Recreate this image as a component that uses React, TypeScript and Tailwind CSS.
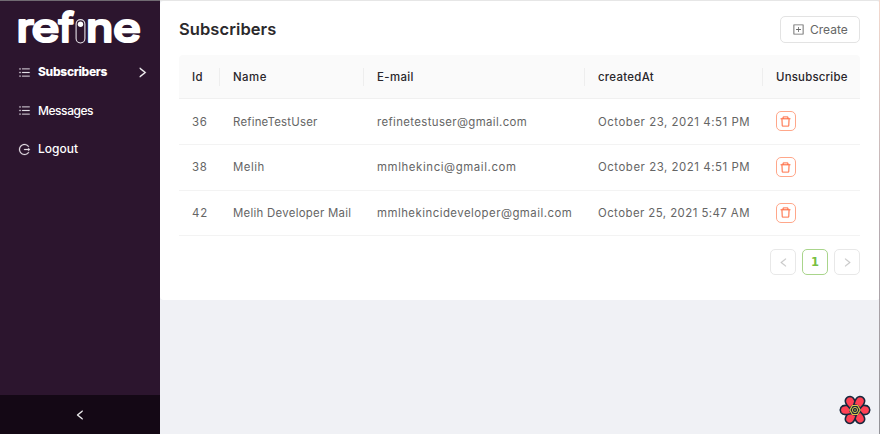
import type { ReactNode } from "react";
import {
  AiOutlineDelete,
  AiOutlineLeft,
  AiOutlineLogout,
  AiOutlinePlusSquare,
  AiOutlineRight,
  AiOutlineUnorderedList,
} from "react-icons/ai";

const columns = "grid grid-cols-[41px_144px_221px_178px_97px]";

const rows = [
  { id: "36", name: "RefineTestUser", email: "refinetestuser@gmail.com", date: "October 23, 2021 4:51 PM", n: "tracking-[0.22px]", e: "tracking-[0.37px]", d: "tracking-[0.55px]", h: "h-[46px]", p: "pt-[2px]" },
  { id: "38", name: "Melih", email: "mmlhekinci@gmail.com", date: "October 23, 2021 4:51 PM", n: "tracking-[0.5px]", e: "tracking-[0.6px]", d: "tracking-[0.55px]", h: "h-[46px]", p: "pt-px" },
  { id: "42", name: "Melih Developer Mail", email: "mmlhekincideveloper@gmail.com", date: "October 25, 2021 5:47 AM", n: "tracking-[0.28px]", e: "tracking-[0.48px]", d: "tracking-[0.45px]", h: "h-[45px]", p: "pt-px" },
];

function Logo() {
  return (
    <svg width="160" height="52" viewBox="0 0 160 52" className="block shrink-0" aria-label="refine">
      <g fill="#fff" stroke="#fff" strokeWidth="2.2" strokeLinejoin="round" fontFamily="Inter, 'Liberation Sans', sans-serif" fontWeight="500" fontSize="40.5">
        <text x="16.5" y="41" textLength="17.5" lengthAdjust="spacingAndGlyphs">r</text>
        <text x="31.5" y="41" textLength="28" lengthAdjust="spacingAndGlyphs">e</text>
        <text x="58.5" y="41" textLength="15.5" lengthAdjust="spacingAndGlyphs">f</text>
        <text x="86" y="41" textLength="27.5" lengthAdjust="spacingAndGlyphs">n</text>
        <text x="113" y="41" textLength="28" lengthAdjust="spacingAndGlyphs">e</text>
      </g>
      <rect x="76.1" y="18.6" width="8.8" height="23.4" rx="4.4" fill="none" stroke="#e4dfe6" strokeWidth="1.1" />
      <circle cx="80.5" cy="23.2" r="2.7" fill="#fff" />
    </svg>
  );
}

function NavItem({ icon, label, active, spacing }: { icon: ReactNode; label: string; active?: boolean; spacing: string }) {
  return (
    <div className="flex h-[38.5px] items-center pl-[18px] pr-3 text-[12px] text-white">
      <span className="w-5 text-[13px] text-[#e6e1e8]">{icon}</span>
      <span className={`${active ? "font-extrabold" : "font-medium"} ${spacing}`}>{label}</span>
      {active && <AiOutlineRight className="-mr-px ml-auto text-[13px] [stroke-width:30]" />}
    </div>
  );
}

function Header({ label, spacing, last }: { label: string; spacing: string; last?: boolean }) {
  return (
    <div className="relative flex h-full items-center pl-[13px] pt-[3px] font-medium text-[#29262b]">
      <span className={spacing}>{label}</span>
      {!last && <span className="absolute right-0 top-[13px] h-[18px] w-px bg-[#eeeeee]" />}
    </div>
  );
}

function ReactQueryFlower() {
  return (
    <svg width="34" height="34" viewBox="-17 -17 34 34" className="absolute bottom-[7px] right-2">
      <g fill="#ff4154" stroke="#16283d" strokeWidth="1.6" strokeLinejoin="round">
        {[0, 60, 120, 180, 240, 300].map((angle) => (
          <path key={angle} d="M3 -3.5 L8 -4.5 Q12.4 -5 14 -2.6 Q15.6 0 14 2.6 Q12.4 5 8 4.5 L3 3.5 Z" transform={`rotate(${angle})`} />
        ))}
      </g>
      <circle r="5.8" fill="#16283d" />
      <path d="M-2.6 -4.5 H2.6 L5.2 0 L2.6 4.5 H-2.6 L-5.2 0 Z" fill="#16283d" stroke="#d8c34a" strokeWidth="1.2" />
      <circle r="2.6" fill="none" stroke="#d8c34a" strokeWidth="1" />
      <circle r="0.8" fill="#d8c34a" />
    </svg>
  );
}

export default function App() {
  return (
    <div className="relative flex h-[434px] w-[880px] overflow-hidden bg-[#f0f1f5] font-['Inter','Liberation_Sans',sans-serif] text-[11.4px]">
      <aside className="flex w-40 shrink-0 flex-col border-t border-[#706a72] bg-[#2c152e]">
        <Logo />
        <nav>
          <NavItem icon={<AiOutlineUnorderedList className="[stroke-width:15]" />} label="Subscribers" active spacing="tracking-[-0.3px]" />
          <NavItem icon={<AiOutlineUnorderedList className="[stroke-width:15]" />} label="Messages" spacing="tracking-[-0.45px]" />
          <NavItem icon={<AiOutlineLogout className="[stroke-width:20]" />} label="Logout" spacing="tracking-[0px]" />
        </nav>
        <div className="mt-auto flex h-[39px] items-center justify-center bg-[#140815] text-[12px] text-white">
          <AiOutlineLeft className="[stroke-width:30]" />
        </div>
      </aside>

      <main className="min-w-0 flex-1 border-t border-[#e6e6e6]">
        <section className="h-[299px] rounded-[4px] bg-white pl-[19px] pr-5 pt-[15px]">
          <div className="flex h-[27px] items-center justify-between">
            <h1 className="text-[16.5px] font-semibold tracking-[0.08px] text-[#2b292c]">Subscribers</h1>
            <button className="flex h-[27px] w-[80px] items-center rounded-[5px] border border-[#e3e3e3] pl-[11px] text-[#666]">
              <AiOutlinePlusSquare className="mr-[5px] text-[13px]" />
              <span className="text-[12px]">Create</span>
            </button>
          </div>

          <div className={`${columns} mt-3 h-[44px] items-center overflow-hidden rounded-t-[4px] border-b border-[#f0f0f0] bg-[#fafafa]`}>
            <Header label="Id" spacing="tracking-[0.3px]" />
            <Header label="Name" spacing="tracking-[0.5px]" />
            <Header label="E-mail" spacing="tracking-[0.4px]" />
            <Header label="createdAt" spacing="tracking-[0.3px]" />
            <Header label="Unsubscribe" spacing="tracking-[0.22px]" last />
          </div>
          {rows.map((row) => (
            <div key={row.id} className={`${columns} ${row.h} items-center whitespace-nowrap border-b border-[#f3f3f3] text-[#656565]`}>
              <span className={`pl-[13px] tracking-[0.8px] ${row.p}`}>{row.id}</span>
              <span className={`pl-[13px] ${row.p} ${row.n}`}>{row.name}</span>
              <span className={`pl-[13px] ${row.p} ${row.e}`}>{row.email}</span>
              <span className={`pl-[13px] ${row.p} ${row.d}`}>{row.date}</span>
              <span className="-mt-px pl-[13px]">
                <button className="flex h-5 w-5 items-center justify-center rounded-[5px] border border-[#ffa78a] text-[13px] text-[#ff7048]">
                  <AiOutlineDelete className="-ml-px shrink-0 [stroke-width:15]" />
                </button>
              </span>
            </div>
          ))}

          <div className="mt-[13px] flex justify-end gap-[6px]">
            <button className="flex h-[26px] w-[26px] items-center justify-center rounded-[5px] border border-[#e8e8e8] text-[11px] text-[#c5c5c5]"><AiOutlineLeft className="[stroke-width:30]" /></button>
            <button className="flex h-[26px] w-[26px] items-center justify-center rounded-[5px] border border-[#a9d58b] pt-px font-['DejaVu_Sans',sans-serif] text-[11.5px] font-bold text-[#78bf43]">1</button>
            <button className="flex h-[26px] w-[26px] items-center justify-center rounded-[5px] border border-[#e8e8e8] text-[11px] text-[#c5c5c5]"><AiOutlineRight className="[stroke-width:30]" /></button>
          </div>
        </section>
      </main>
      <div className="absolute inset-y-0 right-0 w-px bg-gradient-to-b from-[#f5d9ce] via-[#b9adb2] to-[#929297]" />
      <ReactQueryFlower />
    </div>
  );
}
